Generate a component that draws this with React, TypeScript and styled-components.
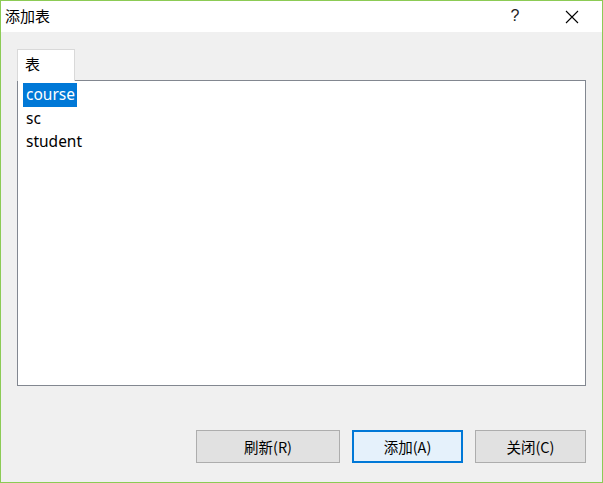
import styled, { createGlobalStyle } from "styled-components";

const GlobalStyle = createGlobalStyle`
  html, body {
    margin: 0;
    padding: 0;
    background: #f0f0f0;
  }
`;

const tables = ["course", "sc", "student"];

export default function App() {
  return (
    <>
      <GlobalStyle />
      <Window>
        <TitleBar>
          <Title>添加表</Title>
          <TitleButtons>
            <HelpButton>?</HelpButton>
            <CloseButton>
              <svg width="14" height="14" viewBox="0 0 14 14">
                <path d="M1 1 L13 13 M13 1 L1 13" stroke="#000" strokeWidth="1.1" fill="none" />
              </svg>
            </CloseButton>
          </TitleButtons>
        </TitleBar>
        <Body>
          <Tabs>
            <Tab>表</Tab>
          </Tabs>
          <ListBox>
            {tables.map((t, i) => (
              <Item key={t} selected={i === 0}>
                {t}
              </Item>
            ))}
          </ListBox>
          <Footer>
            <Button width={144}>刷新(R)</Button>
            <Button width={111} primary>
              添加(A)
            </Button>
            <Button width={111}>关闭(C)</Button>
          </Footer>
        </Body>
      </Window>
    </>
  );
}

const Window = styled.div`
  width: 603px;
  height: 483px;
  box-sizing: border-box;
  border: 1px solid #8ccb55;
  background: #f0f0f0;
  display: flex;
  flex-direction: column;
  font-family: "Segoe UI", "Noto Sans", "Noto Sans CJK SC", sans-serif;
`;

const TitleBar = styled.div`
  height: 31px;
  background: #fff;
  display: flex;
  align-items: center;
  justify-content: space-between;
`;

const Title = styled.div`
  padding-left: 4px;
  margin-top: -2px;
  font-size: 15px;
  font-family: "Noto Sans CJK SC", sans-serif;
  color: #000;
`;

const TitleButtons = styled.div`
  display: flex;
  align-items: center;
  height: 100%;
`;

const HelpButton = styled.div`
  width: 46px;
  margin-right: 11px;
  text-align: center;
  font-size: 16px;
  font-family: "Liberation Sans", sans-serif;
  color: #222;
  margin-top: -2px;
`;

const CloseButton = styled.div`
  width: 46px;
  margin-right: 7px;
  display: flex;
  justify-content: center;
  align-items: center;
`;

const Body = styled.div`
  flex: 1;
  padding: 17px 16px 0 16px;
  display: flex;
  flex-direction: column;
`;

const Tabs = styled.div`
  display: flex;
  height: 31px;
  box-sizing: border-box;
`;

const Tab = styled.div`
  width: 58px;
  box-sizing: border-box;
  border: 1px solid #d9d9d9;
  border-bottom: none;
  background: #fff;
  font-family: "Noto Sans CJK SC", sans-serif;
  font-size: 15px;
  padding: 3px 0 0 7px;
  margin-bottom: -1px;
  position: relative;
  z-index: 1;
`;

const ListBox = styled.div`
  height: 306px;
  box-sizing: border-box;
  border: 1px solid #828790;
  background: #fff;
  padding: 2px 5px;
`;

const Item = styled.div<{ selected?: boolean }>`
  display: inline-block;
  clear: both;
  float: left;
  height: 23.5px;
  line-height: 23px;
  padding: 0 2px 0 3px;
  font-size: 15.5px;
  color: ${(p) => (p.selected ? "#fff" : "#000")};
  background: ${(p) => (p.selected ? "#0078d7" : "transparent")};
`;

const Footer = styled.div`
  display: flex;
  justify-content: flex-end;
  gap: 12px;
  margin-top: 44px;
`;

const Button = styled.div<{ width: number; primary?: boolean }>`
  width: ${(p) => p.width}px;
  height: 33px;
  box-sizing: border-box;
  border: ${(p) => (p.primary ? "2px solid #0078d7" : "1px solid #adadad")};
  background: ${(p) => (p.primary ? "#e5f1fb" : "#e1e1e1")};
  display: flex;
  align-items: center;
  justify-content: center;
  font-family: "Noto Sans CJK SC", sans-serif;
  font-size: 14.5px;
  color: #000;
`;
